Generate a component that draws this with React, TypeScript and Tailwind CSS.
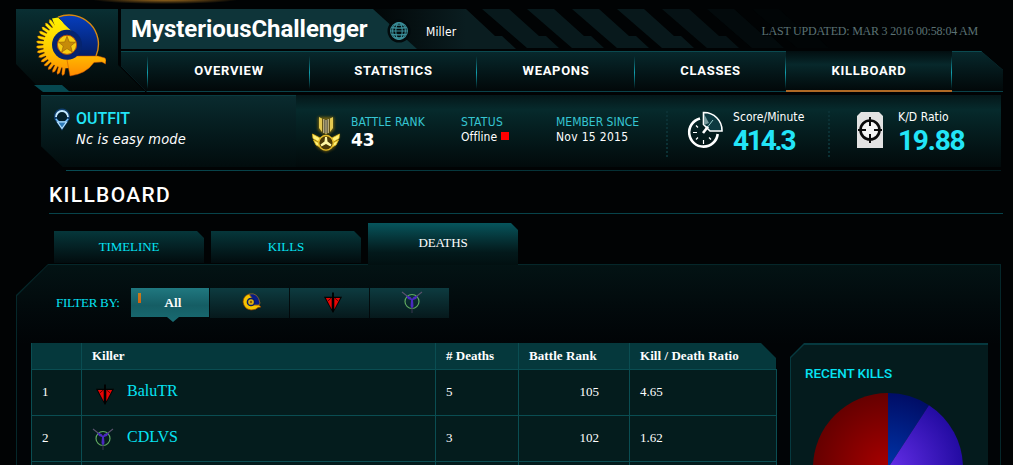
import React from "react";

type IconProps = { className?: string };

function FalconEmblem({ className }: IconProps) {
  const feathers = Array.from({ length: 15 }, (_, i) => 98 + i * 9.8);
  return (
    <svg viewBox="0 0 70 64" className={className}>
      <defs>
        <linearGradient id="gold" gradientUnits="userSpaceOnUse" x1="0" y1="2" x2="0" y2="62">
          <stop offset="0" stopColor="#fff500" />
          <stop offset="0.5" stopColor="#ffd000" />
          <stop offset="1" stopColor="#ff8a00" />
        </linearGradient>
        <linearGradient id="navy" gradientUnits="userSpaceOnUse" x1="0" y1="0" x2="0" y2="46">
          <stop offset="0" stopColor="#063fc0" />
          <stop offset="1" stopColor="#031a5c" />
        </linearGradient>
      </defs>
      {feathers.map((a) => {
        const r = (a * Math.PI) / 180;
        const p = (d: number, o: number) =>
          `${31 + Math.cos(r + o) * d},${31 + Math.sin(r + o) * d}`;
        return (
          <polygon
            key={a}
            points={`${p(17, -0.1)} ${p(29, -0.055)} ${p(31, 0)} ${p(29.5, 0.04)} ${p(17, 0.1)}`}
            fill="url(#gold)"
            stroke="#a83400"
            strokeWidth="0.35"
          />
        );
      })}
      <path d="M16 4.500 L22 3.500 L40 20 L44 42 L33 54 A22.500 22.500 0 0 1 19 12 Z" fill="url(#gold)" />
      <path d="M23 3 A29.300 29.300 0 0 1 60 42 H39 L43 24 L36 17.500 L28 10 Z" fill="url(#navy)" />
      <path d="M22 3.200 A29.300 29.300 0 0 1 60 42" fill="none" stroke="#d98a10" strokeWidth="1.400" />
      <path d="M34 62 L31 46 L38 42 L62 42 L69 44 L70 46 L69.500 50 L66 48 L58 48.500 Q50 60 34 62 Z" fill="url(#gold)" stroke="#c64a00" strokeWidth="0.5" />
      <circle cx="31" cy="30.800" r="15" fill="#06246f" />
      <circle cx="31" cy="30.800" r="9.600" fill="#f6cd13" stroke="#b64e08" strokeWidth="1" />
      <path d="M31 22.300 L33.300 28 L39.300 28.300 L34.700 32 L36.300 38 L31 34.600 L25.700 38 L27.300 32 L22.700 28.300 L28.700 28 Z" fill="#c68b08" stroke="#9e6508" strokeWidth="0.7" />
    </svg>
  );
}

function SmallFalcon({ className }: IconProps) {
  return (
    <svg viewBox="0 0 20 18" className={className}>
      <path d="M7 1 Q1 3 1 9 Q2 16 9 17 Q14 17 16 14.500 L19 14 L17 12 L10 12 L6 9 L10 5 Z" fill="#f5c400" stroke="#8e3c00" strokeWidth="0.7" />
      <path d="M7 1 Q16 -1 18 10 L17 12 L10 12 L10 5 Z" fill="#081c86" stroke="#c98708" strokeWidth="0.6" />
      <circle cx="9" cy="9" r="3.600" fill="#e4b50e" stroke="#091b66" strokeWidth="1.500" />
      <circle cx="9" cy="9" r="1.200" fill="#8c5a08" />
    </svg>
  );
}

function BladeIcon({ className }: IconProps) {
  return (
    <svg viewBox="0 0 20 22" className={className}>
      <path d="M0.500 5 H19.500 L11.500 19.500 L10 21.500 L8.500 19.500 Z" fill="#050303" />
      <path d="M2.500 6.300 H8.600 V18 Z" fill="#e60505" />
      <path d="M17.500 6.300 H11.400 V18 Z" fill="#e60505" />
      <path d="M4.500 9.500 L8 6.500 M15.500 9.500 L12 6.500" stroke="#400" strokeWidth="0.9" />
      <path d="M9 1 L10 0 L11 1 V20 L10 22 L9 20 Z" fill="#000" />
    </svg>
  );
}

function StaffIcon({ className }: IconProps) {
  return (
    <svg viewBox="0 0 22 22" className={className}>
      <circle cx="11" cy="10.500" r="7" fill="none" stroke="#5fa85f" strokeWidth="1.200" />
      <path d="M1 1 L10 8 M21 1 L12 8" stroke="#59516c" strokeWidth="1.100" />
      <path d="M5 4.500 L9.500 6 L11 8 L12.500 6 L17 4.500 L15 8 L12 9 L12.500 15 L11 18 L9.500 15 L10 9 L7 8 Z" fill="#4a28c0" />
      <path d="M11 17 V22" stroke="#3b3750" strokeWidth="1" />
    </svg>
  );
}

function GlobeIcon({ className }: IconProps) {
  return (
    <svg viewBox="0 0 24 24" className={className}>
      <circle cx="12" cy="12" r="11.500" fill="#020a0c" />
      <g fill="none" stroke="#3b8e99" strokeWidth="1.100">
        <circle cx="12" cy="12" r="8.400" />
        <ellipse cx="12" cy="12" rx="3.200" ry="8.400" />
        <ellipse cx="12" cy="12" rx="6.400" ry="8.400" />
        <path d="M3.600 12 H20.400 M5 8.600 Q12 9.600 19 8.600 M5 15.400 Q12 16.400 19 15.400 M7 5.600 Q12 6.600 17 5.600 M7 18.400 Q12 19.400 17 18.400" />
      </g>
    </svg>
  );
}

function MedalIcon({ className }: IconProps) {
  return (
    <svg viewBox="0 0 32 40" className={className}>
      <g className="blur-[1.5px]" opacity="0.7">
        <path d="M8 3 H24 V16 L16 22 L8 16 Z M2 20 L8 34 L16 38 L24 34 L30 20 L16 27 Z" fill="#a07a05" />
      </g>
      <path d="M9 3 L12 4.500 V18 L9 14 Z M23 3 L20 4.500 V18 L23 14 Z" fill="#e3c850" />
      <path d="M12.800 4.500 V19 H19.200 V4.500 L16 6 Z" fill="#33363a" />
      <path d="M13.800 5 V19 M16 6 V20 M18.200 5 V19" stroke="#e8d58a" strokeWidth="1.100" />
      <path d="M2.500 20 L10 24 L9 28 L3 24.500 Z M3.500 26 L9 29 L10 33 L6 31 Z M29.500 20 L22 24 L23 28 L29 24.500 Z M28.500 26 L23 29 L22 33 L26 31 Z" fill="#fff27a" stroke="#e8b914" strokeWidth="0.7" />
      <circle cx="16" cy="28.800" r="7.300" fill="#4a3906" stroke="#e3bb2a" strokeWidth="1.400" />
      <path d="M15 23 H17 L17.500 27.500 L21.500 30.500 L20.500 32.500 L16 30 L11.500 32.500 L10.500 30.500 L14.500 27.500 Z" fill="#fff7a3" />
    </svg>
  );
}

function OutfitIcon({ className }: IconProps) {
  return (
    <svg viewBox="0 0 18 24" className={className}>
      <path d="M3 11 A6.500 6.500 0 1 1 15 11 L9 20 Z" fill="#0b3f78" stroke="#1d63c9" strokeWidth="3" opacity="0.45" />
      <circle cx="9" cy="9" r="5" fill="#04202c" />
      <path d="M3 9 A6 6 0 0 1 15 9" fill="none" stroke="#c4e9ff" strokeWidth="1.800" />
      <path d="M2.800 11 L6 14 H12 L15.200 11" fill="none" stroke="#79c5ff" strokeWidth="1.400" />
      <path d="M4.500 14 H13.500 L9 20.500 Z" fill="#2e7ab8" stroke="#b9e4ff" strokeWidth="1.200" />
    </svg>
  );
}

function ClockIcon({ className }: IconProps) {
  return (
    <svg viewBox="0 0 36 38" className={className}>
      <path d="M13 7.500 A14.300 14.300 0 1 0 30.700 23" fill="none" stroke="#fff" strokeWidth="2.600" />
      <path d="M16.500 1.500 A18 18 0 0 1 35 20 H23 L16.500 13.500 Z" fill="#0d3a41" stroke="#fff" strokeWidth="1.600" />
      <path d="M17 3 L22 12 L17 14 Z" fill="#789b9e" />
      <path d="M16 22 L21 15.500" stroke="#fff" strokeWidth="2.600" />
      <path d="M21 15.500 L26 9" stroke="#9cc" strokeWidth="1" />
      <path d="M16.500 33 V29 M6 21.500 H10 M9 28.500 L11 26.500 M24 28.500 L22 26.500 M9 14.500 L11 16.500" stroke="#fff" strokeWidth="1.200" />
    </svg>
  );
}

function TargetIcon({ className }: IconProps) {
  return (
    <svg viewBox="0 0 26 36" className={className}>
      <path d="M4 0 H22 L26 4 V36 H0 V4 Z" fill="#e2e2e2" />
      <circle cx="13" cy="18" r="9.500" fill="#f4f4f4" stroke="#0a0a0a" strokeWidth="2.600" />
      <path d="M13 5 V14 M13 22 V31 M1 18 H9 M17 18 H25" stroke="#0a0a0a" strokeWidth="2" />
    </svg>
  );
}

function Stripes() {
  return (
    <svg viewBox="0 0 540 40" className="absolute left-[345px] top-0 h-10 w-[540px] overflow-visible">
      <defs>
        <linearGradient id="server" gradientUnits="userSpaceOnUse" x1="-90" y1="0" x2="0" y2="0">
          <stop offset="0" stopColor="#020708" />
          <stop offset="1" stopColor="#0a1d20" />
        </linearGradient>
      </defs>
      <path d="M-100 0 H0 L29 27 H36 L50 40 H-60 Z" fill="url(#server)" />
      {[0, 1, 2, 3, 4, 5, 6].map((i) => (
        <path
          key={i}
          transform={`translate(${i * 45} 0)`}
          d="M16 0 H43 L73 27 H80 L93 39 H61 Z"
          fill="#08191c"
          opacity={[1, 1, 1, 0.95, 0.7, 0.35, 0.12][i]}
        />
      ))}
    </svg>
  );
}

const nav = [
  { label: "OVERVIEW", box: "w-[162px]" },
  { label: "STATISTICS", box: "w-[167px]" },
  { label: "WEAPONS", box: "w-[158px]" },
  { label: "CLASSES", box: "w-[151px]" },
  { label: "KILLBOARD", box: "w-[166px]" },
];

function Divider() {
  return <div className="mt-1 h-[33px] w-px shrink-0 bg-linear-to-b from-transparent via-[#119dac] to-transparent" />;
}

function Header() {
  return (
    <header className="flex h-[84px] pl-4">
      <div className="relative h-[83px] w-[129px] shrink-0">
        <div className="h-[82px] bg-linear-to-b from-[#092f33] to-[#020808] pl-5 pt-[5px] [clip-path:polygon(0_0,102px_0,102px_56px,128px_82px,26px_82px,0_55px)]">
          <FalconEmblem className="h-[64px] w-[70px]" />
        </div>
        <div className="absolute bottom-0 left-[44px] h-px w-[85px] bg-[#083b43]" />
        <div className="absolute bottom-0 left-[18px] h-[7px] w-9 bg-[#064850] [clip-path:polygon(0_0,28px_0,100%_100%,9px_100%)]" />
      </div>
      <div className="-ml-6 w-[882px]">
        <div className="relative flex h-10 items-center">
          <Stripes />
          <div className="relative h-10 w-[296px] bg-[#0e3439] pl-2.5 [clip-path:polygon(0_0,252px_0,296px_40px,0_40px)]">
            <h1 className="font-['Roboto'] text-[24px] font-bold leading-[40px] tracking-[-0.05px] text-white">MysteriousChallenger</h1>
          </div>
          <GlobeIcon className="relative -ml-[30px] mt-1 size-6" />
          <span className="relative ml-[15px] mt-[5px] font-['DejaVu_Sans_Condensed','DejaVu_Sans'] text-[12px] tracking-[0.15px] text-white">Miller</span>
          <span className="relative ml-auto mr-[25px] mt-1 font-['Liberation_Serif'] text-[12px] tracking-[-0.22px] text-[#5b7274]">LAST UPDATED: MAR 3 2016 00:58:04 AM</span>
        </div>
        <div className="mt-0.5 h-[41px] bg-[#0a434b] [clip-path:polygon(0_0,860px_0,882px_19px,882px_100%,26px_100%,0_15px)]">
          <nav className="flex h-[40px] border-t border-[#0b4a50] bg-linear-to-b from-[#07282c] to-[#020809] pl-[26px]">
            {nav.map((n) => (
              <React.Fragment key={n.label}>
                <Divider />
                <div
                  className={`${n.box} -mr-px flex items-center justify-center font-['Roboto'] text-[13px] font-bold tracking-[0.7px] text-white ${
                    n.label === "KILLBOARD"
                      ? "-mt-px h-[41px] border-b-2 border-[#b06925] bg-linear-to-b from-[#020e10] via-[#07282b] via-35% to-[#020a0b]"
                      : "h-[41px] pb-[3px]"
                  }`}
                >
                  {n.label}
                </div>
              </React.Fragment>
            ))}
            <Divider />
          </nav>
        </div>
      </div>
    </header>
  );
}

const label = "font-['DejaVu_Sans_Condensed','DejaVu_Sans'] text-[12px] leading-[15px]";

function Summary() {
  return (
    <section className="ml-[41px] mt-0.5 w-[960px]">
      <div className="flex h-[72px] bg-linear-to-b from-[#041719] via-[#062a2c] via-20% to-[#020a0b] [clip-path:polygon(0_0,100%_0,100%_100%,22px_100%,0_51px)]">
        <div className="flex w-[255px] border-t border-[#0a3b40] bg-linear-to-b from-[#0a2b2f] to-[#020c0d] pl-3 pt-3">
          <OutfitIcon className="h-6 w-[18px]" />
          <div className="pl-[5px] pt-0.5">
            <div className="font-['Roboto'] text-[16px] font-medium leading-[18px] text-[#22e5f8]">OUTFIT</div>
            <div className="font-['DejaVu_Sans_Condensed','DejaVu_Sans'] text-[14.500px] italic leading-[22px] tracking-[0.18px] text-white">Nc is easy mode</div>
          </div>
        </div>
        <MedalIcon className="ml-[14px] mt-[19px] h-[40px] w-8" />
        <div className="ml-[9px] mt-5 w-[110px]">
          <div className={`${label} text-[#36c5d2] tracking-[0.12px]`}>BATTLE RANK</div>
          <div className="font-['DejaVu_Sans'] text-[17px] font-bold leading-[20px] tracking-[-0.2px] text-white">43</div>
        </div>
        <div className="mt-5 w-[95px]">
          <div className={`${label} text-[#36c5d2] tracking-[0.3px]`}>STATUS</div>
          <div className={`${label} flex items-center text-white tracking-[0.1px]`}>Offline<span className="mb-[3px] ml-1 size-2 bg-[#ff0000]" /></div>
        </div>
        <div className="mt-5 w-[110px]">
          <div className={`${label} text-[#36c5d2] tracking-[0px]`}>MEMBER SINCE</div>
          <div className={`${label} text-white tracking-[0.3px]`}>Nov 15 2015</div>
        </div>
        <div className="mt-4 h-[46px] border-l-2 border-dotted border-[#0b3135]" />
        <ClockIcon className="ml-[19px] mt-4 h-[38px] w-9" />
        <div className="ml-[10px] mt-[15px] w-[95px]">
          <div className={`${label} text-white tracking-[0.05px]`}>Score/Minute</div>
          <div className="font-['Roboto'] text-[28px] font-bold leading-[31px] tracking-[-2.2px] text-[#22e5f8]">414.3</div>
        </div>
        <div className="mt-4 h-[46px] border-l-2 border-dotted border-[#0b3135]" />
        <TargetIcon className="ml-[27px] mt-[17px] h-9 w-[26px]" />
        <div className="ml-[15px] mt-[15px]">
          <div className={`${label} text-white tracking-[0.05px]`}>K/D Ratio</div>
          <div className="font-['Roboto'] text-[28px] font-bold leading-[31px] tracking-[-1.2px] text-[#22e5f8]">19.88</div>
        </div>
      </div>
      <div className="ml-[25px] mt-[3px] h-px bg-linear-to-r from-[#084b53] to-[#031d20]" />
    </section>
  );
}

function Tabs() {
  const idle =
    "flex h-8 w-[150px] justify-center bg-linear-to-b from-[#05373b] to-[#020c0e] pt-[6px] text-[#06e3f3] [clip-path:polygon(0_0,143px_0,100%_7px,100%_100%,0_100%)]";
  return (
    <div className="flex h-[41px] items-end gap-[7px] pl-[54px] font-['Liberation_Serif'] text-[13px] leading-[20px] tracking-[-0.1px]">
      <div className={`${idle} mb-px`}>TIMELINE</div>
      <div className={`${idle} mb-px`}>KILLS</div>
      <div className="relative z-10 -mb-px flex h-[42px] w-[150px] justify-center bg-linear-to-b from-[#06555c] via-[#03191b] via-70% to-[#021011] pt-[10px] text-white [clip-path:polygon(0_0,143px_0,100%_7px,100%_100%,0_100%)]">
        DEATHS
      </div>
    </div>
  );
}

function Filters() {
  const cell = "flex h-[30px] w-[79px] justify-center bg-linear-to-b from-[#0d3b40] to-[#06191c]";
  return (
    <div className="flex pl-10 pt-6 font-['Liberation_Serif']">
      <span className="w-[75px] pt-[5px] text-[13px] leading-5 tracking-[-0.3px] text-[#06e3f3]">FILTER BY:</span>
      <div className="flex gap-px">
        <div className="flex h-[35px] w-[78px] bg-linear-to-b from-[#207880] via-[#155d64] to-[#196c73] pl-[7px] pt-[5px] text-[13.500px] leading-5 text-white [text-shadow:0.4px_0_0_#fff] [clip-path:polygon(0_0,100%_0,100%_29px,48px_29px,42px_34px,36px_29px,0_29px)]">
          <span className="mr-[23px] h-[10px] w-[3px] bg-linear-to-b from-[#c37e1d] to-[#d46310]" />
          All
        </div>
        <div className={cell}><SmallFalcon className="ml-1 mt-[5px] h-[18px] w-5" /></div>
        <div className={cell}><BladeIcon className="ml-1.5 mt-1 h-[21px] w-5" /></div>
        <div className={cell}><StaffIcon className="ml-1 mt-[3px] size-[22px]" /></div>
      </div>
    </div>
  );
}

const rows = [
  { n: 1, name: "BaluTR", Icon: BladeIcon, iconBox: "h-[21px] w-5 ml-[3px] mr-3 mt-[14px]", deaths: 5, rank: 105, kd: "4.65" },
  { n: 2, name: "CDLVS", Icon: StaffIcon, iconBox: "size-[22px] mr-[13px] mt-3", deaths: 3, rank: 102, kd: "1.62" },
  { n: 3, name: "", Icon: null, iconBox: "", deaths: "", rank: "", kd: "" },
];

function KillerTable() {
  const cols = "grid grid-cols-[50px_354px_83px_111px_147px]";
  return (
    <div className="w-[746px] font-['Liberation_Serif'] text-[13px] text-white">
      <div className={`${cols} h-[26px] bg-[#05383c] font-bold leading-[26px] [clip-path:polygon(0_0,730px_0,745px_15px,745px_100%,0_100%)] *:border-l *:border-[#0a4d52] *:pl-2.5`}>
        <span />
        <span>Killer</span>
        <span># Deaths</span>
        <span className="tracking-[0.08px]">Battle Rank</span>
        <span className="tracking-[0.05px]">Kill / Death Ratio</span>
      </div>
      {rows.map(({ n, name, Icon, iconBox, deaths, rank, kd }) => (
        <div
          key={n}
          className={`${cols} h-[46px] border-r border-t border-[#0a4d52] bg-[#041c1d] leading-[44px] *:border-l *:border-[#0a4d52] *:pl-2.5`}
        >
          <span>{name && n}</span>
          <span className="flex text-[16px] leading-[42px] text-[#06e3f3]">
            {Icon && <Icon className={iconBox} />}
            {name}
          </span>
          <span>{deaths}</span>
          <span className="pr-[30px] text-right">{rank}</span>
          <span>{kd}</span>
        </div>
      ))}
    </div>
  );
}

function RecentKills() {
  return (
    <aside className="h-[122px] w-[198px] bg-[#06393f] [clip-path:polygon(14px_0,100%_0,100%_100%,0_100%,0_14px)]">
      <div className="h-full bg-[#041b1d] [clip-path:polygon(14px_2px,100%_2px,100%_100%,1px_100%,1px_15px)]">
        <h3 className="pl-[15px] pt-[21px] font-['Roboto'] text-[13.500px] font-medium leading-[18px] tracking-[-0.1px] text-[#06e3f3]">RECENT KILLS</h3>
        <svg viewBox="0 0 150 73" className="ml-[23px] mt-[11px] h-[73px] w-[150px]">
          <defs>
            <radialGradient id="red" gradientUnits="userSpaceOnUse" cx="75" cy="75" r="75">
              <stop offset="0" stopColor="#a80000" />
              <stop offset="1" stopColor="#660000" />
            </radialGradient>
            <radialGradient id="blue" gradientUnits="userSpaceOnUse" cx="75" cy="75" r="75">
              <stop offset="0" stopColor="#0034a8" />
              <stop offset="1" stopColor="#000d66" />
            </radialGradient>
            <radialGradient id="violet" gradientUnits="userSpaceOnUse" cx="75" cy="75" r="75">
              <stop offset="0" stopColor="#642ee8" />
              <stop offset="1" stopColor="#230ba2" />
            </radialGradient>
          </defs>
          <path d="M75 75 V0 A75 75 0 0 0 0 75 Z" fill="url(#red)" />
          <path d="M75 75 V0 A75 75 0 0 1 116 12.200 Z" fill="url(#blue)" />
          <path d="M75 75 L116 12.200 A75 75 0 0 1 150 75 Z" fill="url(#violet)" />
        </svg>
      </div>
    </aside>
  );
}

export default function App() {
  return (
    <div className="h-[465px] w-[1013px] overflow-hidden bg-[#010304]">
      <div className="h-[9px] bg-[radial-gradient(ellipse_75px_5px_at_165px_-1px,#b47a22,transparent)]" />
      <Header />
      <Summary />
      <div className="ml-[49px] h-[43px] w-[954px] border-b border-[#07434a] pt-[10px]">
        <h2 className="font-['Roboto'] text-[21px] font-medium leading-[28px] tracking-[1.3px] text-white">KILLBOARD</h2>
      </div>
      <div className="h-[9px]" />
      <Tabs />
      <main className="ml-4 h-[202px] w-[985px] bg-[#05272a] [clip-path:polygon(32px_0,100%_0,100%_100%,0_100%,0_31px)]">
        <div className="h-full bg-linear-to-b from-[#031314] to-[#010406] to-40% [clip-path:polygon(32px_1px,984px_1px,984px_100%,1px_100%,1px_32px)]">
          <div className="h-[79px]"><Filters /></div>
          <div className="flex items-start gap-[13px] pl-[15px]">
            <KillerTable />
            <RecentKills />
          </div>
        </div>
      </main>
    </div>
  );
}
